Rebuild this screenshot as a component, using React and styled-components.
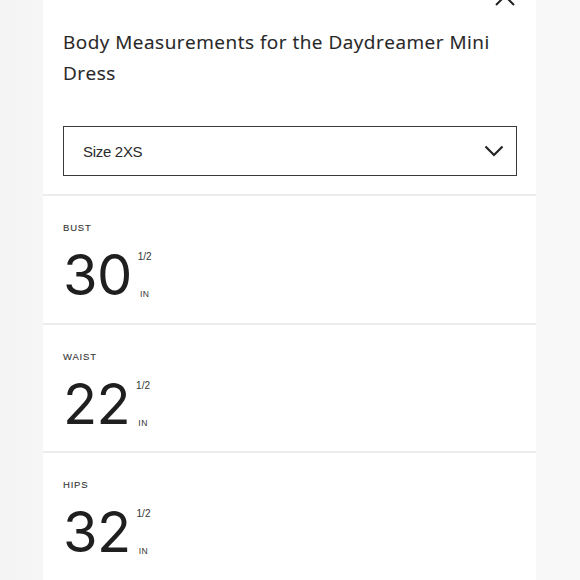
import React from "react";
import styled, { createGlobalStyle } from "styled-components";

const Global = createGlobalStyle`
  html, body { margin: 0; padding: 0; background: #f6f6f6; }
  body { font-family: Inter, "Liberation Sans", sans-serif; color: #222; }
`;

const Page = styled.div`
  display: flex;
  padding-left: 43px;
  width: 580px;
  height: 580px;
  box-sizing: border-box;
  overflow: hidden;
  background: linear-gradient(90deg, #f4f4f4 0%, #f6f6f6 7%, #f8f8f8 100%);
`;

const Panel = styled.div`
  position: relative;
  width: 493px;
  background: #fff;
  display: flex;
  flex-direction: column;
`;

const Close = styled.button`
  position: absolute;
  top: -16px;
  right: 19px;
  width: 24px;
  height: 24px;
  padding: 0;
  border: 0;
  background: none;
  display: flex;
  align-items: center;
  justify-content: center;
`;

const Header = styled.div`
  padding: 27px 19px 18px 20px;
  display: flex;
  flex-direction: column;
`;

const Title = styled.h2`
  margin: 0;
  font-family: "Open Sans", sans-serif;
  font-weight: 400;
  font-size: 19px;
  line-height: 31px;
  color: #262626;
  letter-spacing: 0.5px;
  padding-right: 20px;
  -webkit-text-stroke: 0.15px #262626;
`;

const Select = styled.div`
  margin-top: 37px;
  height: 50px;
  box-sizing: border-box;
  border: 1.5px solid #3a3a3a;
  display: flex;
  align-items: center;
  justify-content: space-between;
  padding: 0 12px 0 19px;
`;

const SelectText = styled.span`
  font-family: "Liberation Sans", Arial, sans-serif;
  font-size: 15px;
  color: #2a2a2a;
  letter-spacing: -0.3px;
`;

const Section = styled.section`
  border-top: 2px solid #ededed;
  height: 129px;
  box-sizing: border-box;
  padding: 26px 20px 0;
  display: flex;
  flex-direction: column;
`;

const Label = styled.div`
  font-family: "Liberation Sans", Arial, sans-serif;
  font-size: 9.5px;
  line-height: 12px;
  letter-spacing: 0.8px;
  color: #333;
  -webkit-text-stroke: 0.1px #333;
`;

const Value = styled.div`
  margin-top: 13px;
  display: flex;
  align-items: flex-start;
`;

const Number = styled.span`
  font-family: Inter, "Liberation Sans", sans-serif;
  font-size: 56px;
  line-height: 56px;
  letter-spacing: -0.6px;
  font-variant-numeric: proportional-nums;
  color: #1f1f1f;
`;

const Unit = styled.div`
  margin-left: 6px;
  padding-top: 5px;
  display: flex;
  flex-direction: column;
  align-items: center;
`;

const Fraction = styled.span`
  font-family: "Liberation Sans", Arial, sans-serif;
  font-size: 10px;
  line-height: 10px;
  color: #333;
`;

const Inch = styled.span`
  margin-top: 28px;
  font-family: "Liberation Sans", Arial, sans-serif;
  font-size: 8.5px;
  line-height: 9px;
  letter-spacing: 0.5px;
  color: #333;
`;

const rows = [
  { label: "BUST", value: "30" },
  { label: "WAIST", value: "22" },
  { label: "HIPS", value: "32" },
];

export default function App() {
  return (
    <>
      <Global />
      <Page>
        <Panel>
          <Close aria-label="Close">
            <svg width="22" height="22" viewBox="0 0 22 22">
              <path d="M2 2 L20 20 M20 2 L2 20" stroke="#222" strokeWidth="2" fill="none" />
            </svg>
          </Close>
          <Header>
            <Title>Body Measurements for the Daydreamer Mini Dress</Title>
            <Select>
              <SelectText>Size 2XS</SelectText>
              <svg width="20" height="12" viewBox="0 0 20 12">
                <path d="M1.5 1.5 L10 10 L18.5 1.5" stroke="#222" strokeWidth="2.2" fill="none" />
              </svg>
            </Select>
          </Header>
          {rows.map((r) => (
            <Section key={r.label}>
              <Label>{r.label}</Label>
              <Value>
                <Number>{r.value}</Number>
                <Unit>
                  <Fraction>1/2</Fraction>
                  <Inch>IN</Inch>
                </Unit>
              </Value>
            </Section>
          ))}
        </Panel>
      </Page>
    </>
  );
}
